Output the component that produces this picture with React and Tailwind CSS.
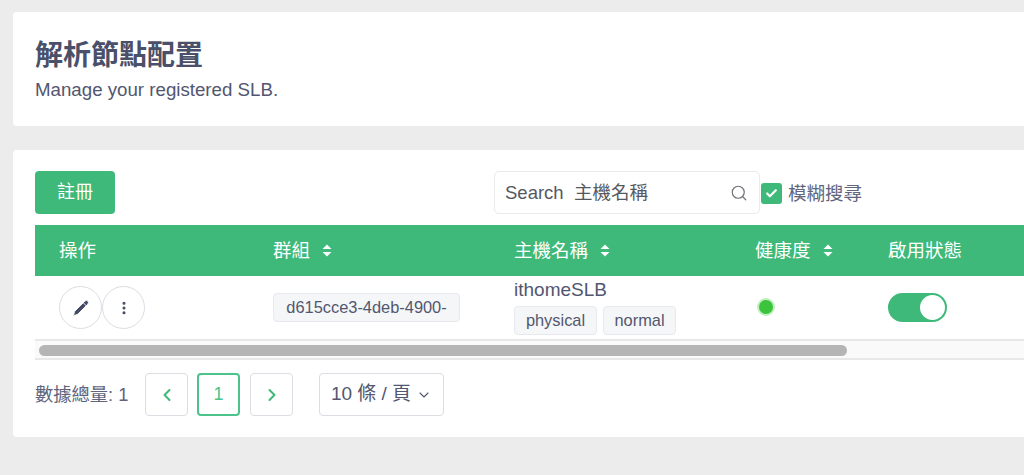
import React from "react";
import { Pencil, MoreVertical, Search, Check, ChevronLeft, ChevronRight, ChevronDown } from "lucide-react";

function SortIcon() {
  return (
    <svg width="10" height="13" viewBox="0 0 10 13" className="fill-white">
      <path d="M5 0.5 L9.5 5 H0.5 Z" />
      <path d="M5 12.5 L9.5 8 H0.5 Z" />
    </svg>
  );
}

function Tag({ children, className }) {
  return (
    <span className={`inline-flex items-center justify-center h-[29px] rounded-[4px] border border-[#e8e9ee] bg-[#f5f6f7] text-[16.4px] text-[#525670] ${className}`}>
      {children}
    </span>
  );
}

export default function App() {
  return (
    <div className="w-[1024px] h-[475px] overflow-hidden bg-[#ececec] pl-[13px] pt-[12px] font-['Liberation_Sans','Noto_Sans_CJK_TC',sans-serif]">
      <div className="w-[1100px] h-[114px] rounded-[4px] bg-white pl-[22px] pt-[25px]">
        <h1 className="text-[28px] leading-[38px] font-bold text-[#4a5069]">解析節點配置</h1>
        <p className="mt-[2px] text-[18.7px] leading-[26px] text-[#525670]">Manage your registered SLB.</p>
      </div>

      <div className="w-[1100px] h-[287px] mt-[24px] rounded-[4px] bg-white pl-[22px] pt-[21px]">
        <div className="flex items-start h-[43px]">
          <button className="w-[80px] h-[43px] rounded-[4px] bg-[#3eb97a] text-white text-[18px]">註冊</button>
          <div className="ml-[379px] flex items-center justify-between w-[266px] h-[43px] rounded-[5px] border border-[#e9e9ee] pl-[10px] pr-[11px] text-[18.5px] text-[#55585f]">
            <span>Search&nbsp; 主機名稱</span>
            <Search size={18} strokeWidth={1.6} className="text-[#6f7278]" />
          </div>
          <div className="ml-[1px] mt-[9px] flex items-center gap-[6px]">
            <span className="flex items-center justify-center w-[21px] h-[21px] rounded-[3px] bg-[#3eb97a]">
              <Check size={13} strokeWidth={4} className="text-white" />
            </span>
            <span className="text-[18.5px] text-[#60647c]">模糊搜尋</span>
          </div>
        </div>

        <div className="mt-[11px] grid grid-cols-[214px_241px_241px_133px_1fr] items-center h-[51px] bg-[#3eb97a] text-white text-[18.5px]">
          <div className="pl-[24px]">操作</div>
          <div className="pl-[24px] flex items-center gap-[12px]">群組 <SortIcon /></div>
          <div className="pl-[24px] flex items-center gap-[12px]">主機名稱 <SortIcon /></div>
          <div className="pl-[24px] flex items-center gap-[12px]">健康度 <SortIcon /></div>
          <div className="pl-[24px]">啟用狀態</div>
        </div>

        <div className="grid grid-cols-[214px_241px_241px_133px_1fr] items-center h-[63px] text-[#525670]">
          <div className="pl-[24px] flex">
            <span className="flex items-center justify-center w-[43px] h-[43px] rounded-full border border-[#dcdde3]">
              <Pencil size={18} fill="#454b66" strokeWidth={1.2} className="text-white" />
            </span>
            <span className="flex items-center justify-center w-[43px] h-[43px] rounded-full border border-[#dcdde3]">
              <MoreVertical size={16} strokeWidth={2.6} className="text-[#454b66]" />
            </span>
          </div>
          <div className="pl-[24px]">
            <Tag className="w-[187px]">d615cce3-4deb-4900-</Tag>
          </div>
          <div className="pl-[24px]">
            <div className="text-[19px] leading-[24px] mt-[-3px] mb-[4px]">ithomeSLB</div>
            <div className="flex gap-[6px]">
              <Tag className="w-[83px]">physical</Tag>
              <Tag className="w-[73px]">normal</Tag>
            </div>
          </div>
          <div className="pl-[26px] pb-[2px]">
            <span className="block w-[18px] h-[18px] rounded-full bg-[#3cc43c] border-[2px] border-[#c2efc2]"></span>
          </div>
          <div className="pl-[24px]">
            <span className="flex items-center justify-end w-[59px] h-[29px] rounded-full bg-[#3eb97a] pr-[2px]">
              <span className="block w-[25px] h-[25px] rounded-full bg-white"></span>
            </span>
          </div>
        </div>

        <div className="h-[21px] border-y-[2px] border-[#e8e8e8] bg-[#fafafa] pl-[4px] pt-[4px]">
          <div className="w-[808px] h-[11px] rounded-full bg-[#b5b5b5]"></div>
        </div>

        <div className="mt-[13px] flex items-center h-[43px]">
          <span className="text-[18.3px] text-[#60647c] w-[110px]">數據總量: 1</span>
          <span className="flex items-center justify-center w-[43px] h-[43px] rounded-[4px] border border-[#dcdde3] text-[#3eb97a]">
            <ChevronLeft size={20} strokeWidth={2.4} />
          </span>
          <span className="ml-[9px] flex items-center justify-center w-[43px] h-[43px] rounded-[4px] border-[2px] border-[#4cc38a] text-[#4cc38a] text-[18px]">1</span>
          <span className="ml-[10px] flex items-center justify-center w-[43px] h-[43px] rounded-[4px] border border-[#dcdde3] text-[#3eb97a]">
            <ChevronRight size={20} strokeWidth={2.4} />
          </span>
          <span className="ml-[26px] flex items-center justify-center gap-[5px] w-[125px] h-[43px] rounded-[4px] border border-[#dcdde3] text-[19px] text-[#525670]">
            10 條 / 頁
            <ChevronDown size={16} strokeWidth={1.6} />
          </span>
        </div>
      </div>
    </div>
  );
}
